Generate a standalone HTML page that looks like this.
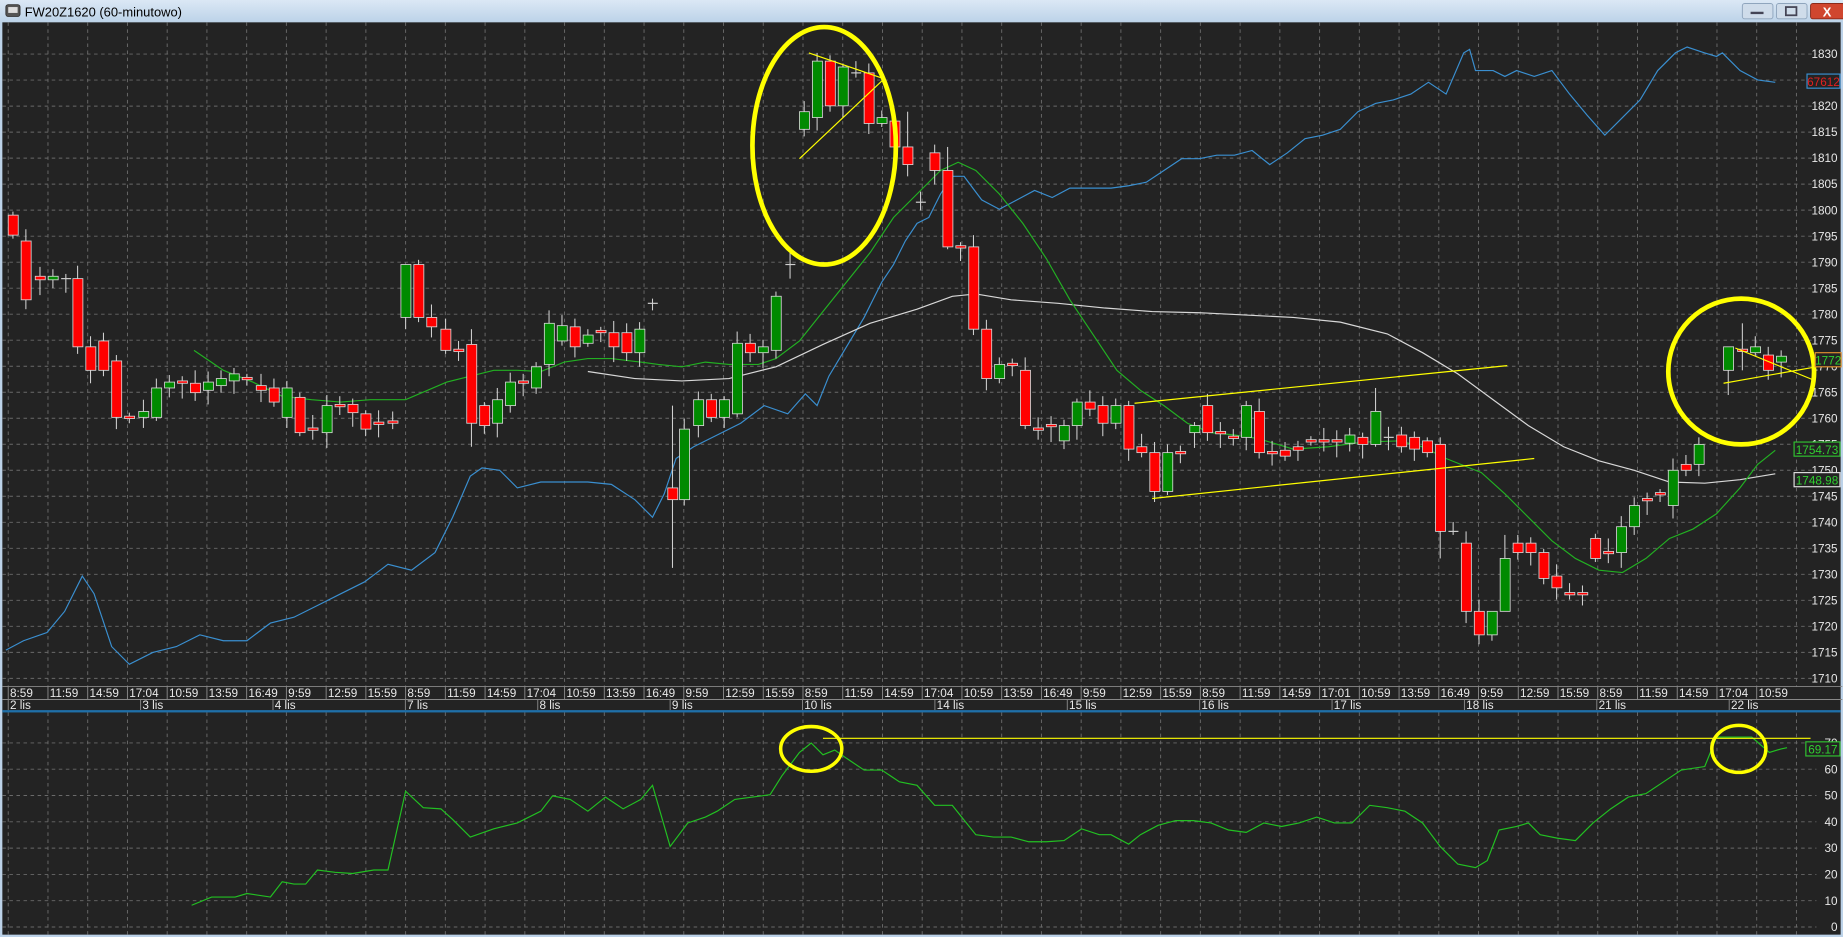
<!DOCTYPE html>
<html><head><meta charset="utf-8">
<style>
html,body{margin:0;padding:0;background:#232323;overflow:hidden}
svg{display:block}
text{font-family:"Liberation Sans",sans-serif}
</style></head>
<body>
<svg id="s" width="1843" height="937" viewBox="0 0 1567.6 797" preserveAspectRatio="none" xmlns="http://www.w3.org/2000/svg">
<defs>
<linearGradient id="tb" x1="0" y1="0" x2="0" y2="1"><stop offset="0" stop-color="#dbe8f5"/><stop offset="1" stop-color="#bcd2e8"/></linearGradient>
</defs>
<rect x="0" y="0" width="1567.6" height="797" fill="#bcd2e8"/>
<rect x="0" y="0" width="1567.6" height="19" fill="url(#tb)"/>
<rect x="5" y="4" width="12" height="10" rx="2" fill="#555" stroke="#333" stroke-width="0.8"/>
<rect x="7" y="6" width="8" height="5" fill="#ddd"/>
<text x="21" y="14" font-size="11" fill="#000">FW20Z1620 (60-minutowo)</text>
<rect x="1482" y="3" width="26" height="13" rx="2" fill="#cfdcea" stroke="#8fa5bd" stroke-width="0.8"/>
<rect x="1489" y="10" width="11" height="2" fill="#445"/>
<rect x="1511" y="3" width="26" height="13" rx="2" fill="#cfdcea" stroke="#8fa5bd" stroke-width="0.8"/>
<rect x="1519" y="6" width="9" height="7" fill="none" stroke="#445" stroke-width="1.5"/>
<rect x="1540" y="3" width="29" height="13" rx="2" fill="#d0462f" stroke="#8a2a1a" stroke-width="0.8"/>
<text x="1554" y="14" font-size="11" font-weight="bold" fill="#fff" text-anchor="middle">X</text>
<rect x="2" y="19" width="1563.6" height="776" fill="#232323"/>
<g id="grid" stroke="#6a6a6a" stroke-width="0.8" stroke-dasharray="3,3" fill="none"></g>
<g id="axis" font-size="10" fill="#e8e8e8"></g>
<rect x="2" y="604" width="1563.6" height="2" fill="#1f6fa8"/>
<g id="lines" fill="none"></g>
<g id="candles"></g>
<g id="ann" fill="none" stroke="#ffff00"></g>
<g id="boxes" font-size="10"></g>
</svg>
<script>
var NS="http://www.w3.org/2000/svg";
function el(p,t,a,txt){var e=document.createElementNS(NS,t);for(var k in a)e.setAttribute(k,a[k]);if(txt!==undefined)e.textContent=txt;document.getElementById(p).appendChild(e);return e;}
for(var i=0;i<46;i++){var x=7+i*33.8;el("grid","line",{x1:x,y1:19,x2:x,y2:584});el("grid","line",{x1:x,y1:606,x2:x,y2:795});}
for(var p=1830;p>=1710;p-=5){var y=46+(1830-p)*4.425;el("grid","line",{x1:2,y1:y,x2:1545,y2:y});el("axis","text",{x:1563,y:y+3.5,"text-anchor":"end"},""+p);}
for(var r=0;r<=70;r+=10){var y=788.5-2.237*r;el("grid","line",{x1:2,y1:y,x2:1545,y2:y});el("axis","text",{x:1563,y:y+3.5,"text-anchor":"end"},""+r);}
el("axis","line",{x1:2,y1:584,x2:1567,y2:584,stroke:"#888","stroke-width":0.8});
el("axis","line",{x1:2,y1:595,x2:1567,y2:595,stroke:"#888","stroke-width":0.8});
var tl="8:59 11:59 14:59 17:04 10:59 13:59 16:49 9:59 12:59 15:59 8:59 11:59 14:59 17:04 10:59 13:59 16:49 9:59 12:59 15:59 8:59 11:59 14:59 17:04 10:59 13:59 16:49 9:59 12:59 15:59 8:59 11:59 14:59 17:01 10:59 13:59 16:49 9:59 12:59 15:59 8:59 11:59 14:59 17:04 10:59".split(" ");
for(var i=0;i<tl.length;i++){var x=7+i*33.8;el("axis","line",{x1:x,y1:584,x2:x,y2:595,stroke:"#888","stroke-width":0.8});el("axis","text",{x:x+1.5,y:593},tl[i]);}
var dl=["2 lis","3 lis","4 lis","7 lis","8 lis","9 lis","10 lis","14 lis","15 lis","16 lis","17 lis","18 lis","21 lis","22 lis"];
for(var i=0;i<dl.length;i++){var x=7+i*112.6;el("axis","line",{x1:x,y1:595,x2:x,y2:604,stroke:"#888","stroke-width":0.8});el("axis","text",{x:x+1.5,y:603},dl[i]);}
function pl(pts,c,w){el("lines","polyline",{points:pts,stroke:c,"stroke-width":w||1});}
pl("5,553 20,545 40,538 55,520 70,490 80,505 95,550 110,565 130,555 150,550 170,540 190,545 210,545 230,530 250,525 270,515 290,505 310,495 330,480 350,485 370,470 385,440 400,405 410,398 425,400 440,415 460,410 480,410 500,410 520,412 540,425 555,440 565,420 575,390 590,380 610,370 630,360 650,345 670,352 685,335 695,345 705,320 720,295 735,270 750,240 760,225 770,205 780,190 790,185 800,165 810,150 820,150 835,170 850,178 865,170 880,162 895,168 910,160 925,160 945,160 960,158 975,155 990,145 1005,135 1020,135 1035,132 1050,132 1065,128 1080,140 1095,130 1110,118 1125,115 1140,110 1155,95 1170,88 1185,85 1200,80 1215,70 1230,80 1245,45 1250,42 1255,60 1270,60 1280,65 1290,60 1305,65 1320,60 1335,80 1350,98 1365,115 1380,100 1395,85 1410,60 1425,45 1435,40 1450,45 1460,48 1465,45 1480,60 1495,68 1510,70","#3a8fd0",1);
pl("500,316 540,322 580,324 620,322 660,312 700,293 740,275 780,263 810,252 830,250 860,255 900,258 940,262 980,265 1020,266 1060,268 1100,270 1140,274 1180,284 1210,300 1240,318 1270,340 1300,362 1330,380 1360,392 1390,400 1420,410 1450,411 1480,408 1510,403","#d8d8d8",1);
pl("165,298 190,315 215,325 240,337 265,340 290,342 315,340 345,340 380,325 400,320 420,315 440,315 460,316 480,308 500,305 520,305 545,308 560,310 580,312 600,308 620,310 645,310 660,305 680,290 700,265 720,240 740,215 760,185 780,165 800,145 815,138 830,145 850,165 870,190 890,220 910,255 930,285 950,315 970,332 990,345 1010,360 1030,368 1050,370 1070,373 1100,382 1130,380 1160,376 1190,375 1210,380 1230,390 1260,402 1280,420 1300,440 1320,460 1340,475 1360,485 1380,487 1400,475 1420,458 1440,450 1460,437 1480,415 1495,395 1510,383","#22b022",1);
pl("163,770 180,763 200,763 210,760 230,763 240,750 250,752 260,752 270,740 285,742 300,743 318,740 330,740 345,673 360,687 375,688 385,697 400,712 420,705 440,700 460,690 470,677 485,680 500,690 515,678 530,688 545,680 555,668 570,720 585,700 600,695 610,690 625,680 640,678 655,676 665,660 680,640 690,632 700,642 710,638 720,645 735,655 750,655 765,665 780,668 795,685 810,685 830,710 845,712 860,712 875,716 890,716 905,715 920,705 935,710 945,710 960,718 970,710 985,702 1000,698 1015,698 1030,700 1045,706 1060,708 1075,700 1090,703 1105,700 1120,695 1135,700 1150,700 1165,685 1180,687 1195,690 1210,700 1225,720 1240,735 1255,738 1265,732 1275,706 1290,703 1300,700 1310,710 1325,713 1340,715 1355,700 1370,688 1385,678 1400,675 1415,665 1430,655 1450,652 1460,627 1475,627 1490,627 1505,640 1515,637 1520,636","#22c022",1);
var D=[[7,183,200],[18,205,255],[30,235,238],[41,238,235],[52,237,237],[62,237,295],[73,295,315],[84,290,315],[95,307,355],[106,354,356],[118,355,350],[129,355,330],[140,330,325],[151,324,326],[162,326,334],[173,332,325],[184,328,322],[195,324,318],[206,321,323],[218,328,332],[229,330,342],[240,355,330],[251,338,368],[262,364,366],[274,368,345],[285,344,346],[296,344,351],[307,352,365],[318,359,361],[330,358,360],[341,270,225],[352,225,270],[363,270,278],[375,280,298],[386,297,299],[397,293,360],[408,345,362],[419,360,340],[430,345,325],[441,324,326],[452,330,312],[463,310,275],[474,290,277],[485,278,295],[496,292,285],[507,281,283],[518,283,295],[529,283,300],[540,300,280],[551,258,258],[568,415,425],[578,425,365],[590,362,340],[601,340,355],[612,355,340],[623,352,292],[634,292,300],[645,300,295],[656,298,252],[668,225,225],[680,110,95],[691,100,52],[702,52,90],[713,90,57],[724,62,62],[735,62,105],[746,105,100],[757,103,125],[768,125,140],[779,172,172],[791,130,145],[802,145,210],[813,209,211],[824,210,280],[835,280,322],[846,322,310],[857,309,311],[868,315,362],[879,364,366],[890,361,363],[901,375,362],[912,362,342],[923,342,348],[934,345,360],[945,360,345],[956,345,382],[967,380,385],[978,385,418],[989,418,385],[1000,384,386],[1012,368,362],[1023,345,368],[1034,367,369],[1045,371,373],[1056,372,345],[1067,350,385],[1078,384,386],[1089,383,388],[1100,380,383],[1111,374,376],[1122,374,376],[1133,374,376],[1144,377,370],[1155,372,378],[1166,378,350],[1177,372,372],[1188,370,380],[1199,372,382],[1210,375,385],[1221,378,452],[1232,452,452],[1243,462,520],[1254,520,540],[1265,540,520],[1276,520,475],[1287,462,470],[1298,462,470],[1309,470,492],[1320,490,500],[1331,504,506],[1342,504,506],[1353,458,475],[1364,469,471],[1375,470,448],[1386,448,430],[1397,424,426],[1408,419,421],[1419,430,400],[1430,395,400],[1441,395,378],[1466,315,295],[1478,297,299],[1489,300,295],[1500,302,315],[1511,308,303]];
var big={568:[345,483],1254:[510,548],1243:[452,530],802:[125,212],768:[95,150],1221:[372,475],397:[280,380],341:[255,280],1166:[330,380],1478:[275,315],1466:[300,336],1276:[455,520],1265:[525,545]};
for(var i=0;i<D.length;i++){var d=D[i],x=d[0]*1.0,o=d[1],c=d[2],t=Math.min(o,c),b=Math.max(o,c);
var w1=3+((i*7)%9),w2=3+((i*5)%11);var hi=t-w1,lo=b+w2;if(big[d[0]]){hi=big[d[0]][0];lo=big[d[0]][1];}
el("candles","line",{x1:x+4,y1:hi,x2:x+4,y2:lo,stroke:"#cfcfcf","stroke-width":0.9});
if(b-t<1.5){el("candles","line",{x1:x,y1:o,x2:x+8.5,y2:o,stroke:"#cfcfcf","stroke-width":1});}
else el("candles","rect",{x:x,y:t,width:8.5,height:b-t,fill:c<o?"#008a00":"#ff0000",stroke:"#d8d8d8","stroke-width":0.7});}
function yl(a){el("ann","line",a);}
yl({x1:965,y1:343,x2:1282,y2:311,"stroke-width":1});
yl({x1:980,y1:424,x2:1305,y2:390,"stroke-width":1});
yl({x1:688,y1:45,x2:752,y2:67,"stroke-width":1});
yl({x1:680,y1:135,x2:752,y2:67,"stroke-width":1});
yl({x1:1476,y1:296,x2:1542,y2:323,"stroke-width":1});
yl({x1:1466,y1:326,x2:1545,y2:312,"stroke-width":1});
yl({x1:700,y1:628,x2:1540,y2:628,"stroke-width":1});
el("ann","ellipse",{cx:701,cy:124,rx:61,ry:101,"stroke-width":4});
el("ann","ellipse",{cx:1481,cy:316,rx:62,ry:62,"stroke-width":4});
el("ann","ellipse",{cx:690,cy:637,rx:26,ry:19,"stroke-width":3});
el("ann","ellipse",{cx:1479,cy:637,rx:23,ry:20,"stroke-width":3});
function bx(x,y,w,txt,tc,bc){el("boxes","rect",{x:x,y:y-6,width:w,height:12,fill:"#232323",stroke:bc,"stroke-width":1});el("boxes","text",{x:x+w/2,y:y+4,"text-anchor":"middle",fill:tc},txt);}
bx(1537,69,28,"67612","#e02020","#3a8fd0");
bx(1544,306,22,"1772","#30d030","#e09030");
bx(1526,382,39,"1754.73","#30d030","#30c030");
bx(1526,408,39,"1748.98","#30d030","#e0e0e0");
bx(1536,637,29,"69.17","#30d030","#30c030");
</script>
</body></html>
